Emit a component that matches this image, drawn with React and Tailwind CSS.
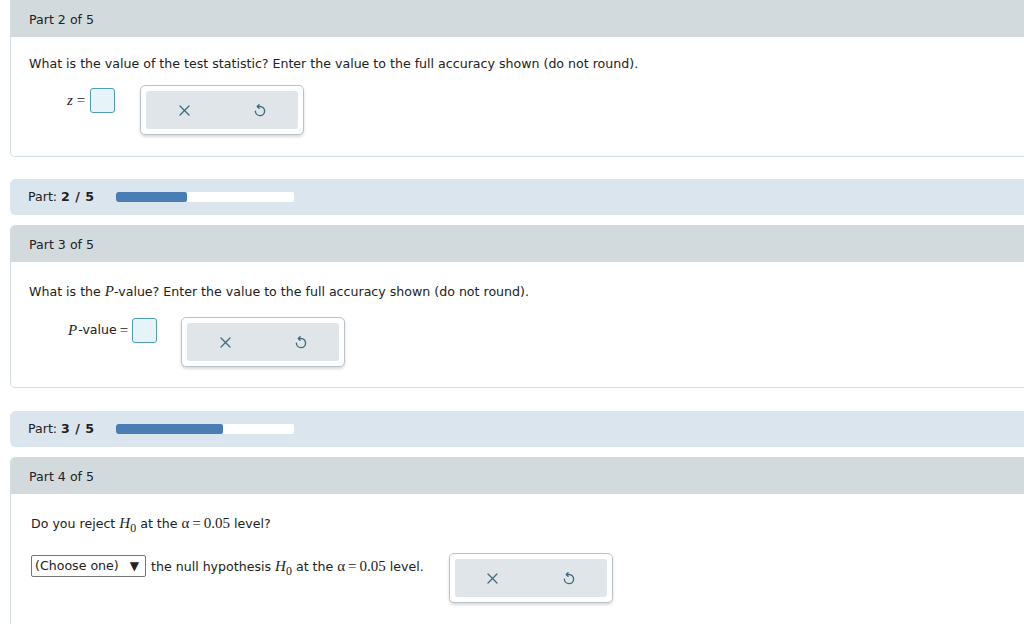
import React from 'react';

const font = { fontFamily: '"DejaVu Sans", Verdana, sans-serif' };

const UndoIcon = () => (
  <svg width="14" height="15" viewBox="0 0 13 14" fill="none" stroke="#3f6c7b" strokeWidth="1.3" strokeLinecap="round" strokeLinejoin="round">
    <path d="M4.2 3.2 H6.5 A4.3 4.3 0 1 1 2.2 7.6" />
    <path d="M5.6 1.6 L4 3.2 L5.6 4.8" />
  </svg>
);

const XIcon = () => (
  <svg width="11" height="11" viewBox="0 0 11 11" stroke="#3f6c7b" strokeWidth="1.3" strokeLinecap="round">
    <path d="M1 1 L10 10 M10 1 L1 10" />
  </svg>
);

const ToolPanel = () => (
  <div className="w-[164px] h-[50px] rounded-[5px] border border-[#b7c3c9] bg-white p-[5px] shadow-[0_2px_3px_rgba(0,0,0,0.15)]">
    <div className="flex h-full rounded-[3px] bg-[#dfe5e8]">
      <div className="flex w-1/2 items-center justify-center">
        <XIcon />
      </div>
      <div className="flex w-1/2 items-center justify-center">
        <UndoIcon />
      </div>
    </div>
  </div>
);

const InputBox = () => (
  <div className="w-[25px] h-[25px] rounded-[3px] border border-[#4e9fb3] bg-[#e6f3f8]" />
);

const Serif = ({ children, italic }) => (
  <span className={`font-['Liberation_Serif'] text-[15px] ${italic ? 'italic' : ''}`}>{children}</span>
);

const H0 = () => (
  <span className="font-['Liberation_Serif'] text-[15px]">
    <i>H</i>
    <span className="relative top-[4px] text-[12px]">0</span>
  </span>
);

const Alpha = () => (
  <span className="font-['Liberation_Serif'] text-[15px]">
    α<span className="mx-[3px]">=</span>0.05
  </span>
);

const CardHeader = ({ text, rounded }) => (
  <div className={`h-[37px] bg-[#d3dadd] flex items-center pl-[18px] pt-[3px] ${rounded ? 'rounded-t-[5px]' : ''}`}>
    {text}
  </div>
);

const Progress = ({ n }) => {
  const pct = (n / 5) * 100;
  return (
    <div className="h-[36px] bg-[#dae5ee] rounded-l-[6px] flex items-center pl-[18px]">
      <span className="w-[88px] pt-[1px]">
        Part: <b className="tracking-[0.5px]">{n}&nbsp;/&nbsp;5</b>
      </span>
      <div className="w-[178px] h-[10px] bg-white rounded-[2px] overflow-hidden">
        <div className="h-full bg-[#4a7db3] rounded-[2px]" style={{ width: pct + '%' }} />
      </div>
    </div>
  );
};

export default function App() {
  return (
    <div className="w-[1024px] h-[624px] overflow-hidden bg-white text-[12.6px] text-[#222]" style={font}>
      <div className="pl-[10px] w-[1040px]">
        {/* Part 2 */}
        <div className="h-[157px] border border-t-0 border-[#d3dde1] rounded-b-[5px]">
          <CardHeader text="Part 2 of 5" />
          <div className="pl-[18px] pt-[18px]">
            <p className="leading-[18px]">
              What is the value of the test statistic? Enter the value to the full accuracy shown (do not round).
            </p>
            <div className="flex items-start mt-[12px] pl-[38px]">
              <div className="flex items-center mt-[3px]">
                <span className="font-['Liberation_Serif'] text-[15px] italic">z</span>
                <span className="font-['Liberation_Serif'] text-[15px] ml-[4px] mr-[5px]">=</span>
                <InputBox />
              </div>
              <div className="ml-[25px]">
                <ToolPanel />
              </div>
            </div>
          </div>
        </div>

        <div className="mt-[22px]">
          <Progress n={2} />
        </div>

        {/* Part 3 */}
        <div className="mt-[10px] h-[163px] border border-t-0 border-[#d3dde1] rounded-[5px]">
          <CardHeader text="Part 3 of 5" rounded />
          <div className="pl-[18px] pt-[20px]">
            <p className="leading-[18px]">
              What is the <Serif italic>P</Serif>-value? Enter the value to the full accuracy shown (do not round).
            </p>
            <div className="flex items-start mt-[16px] pl-[39px]">
              <div className="flex items-center mt-[1px]">
                <Serif italic>P</Serif>
                <span className="ml-[1px]">-value</span>
                <span className="font-['Liberation_Serif'] text-[15px] ml-[3px] mr-[4px]">=</span>
                <InputBox />
              </div>
              <div className="ml-[24px]">
                <ToolPanel />
              </div>
            </div>
          </div>
        </div>

        <div className="mt-[23px]">
          <Progress n={3} />
        </div>

        {/* Part 4 */}
        <div className="mt-[10px] h-[200px] border border-t-0 border-[#d3dde1] rounded-[5px]">
          <CardHeader text="Part 4 of 5" rounded />
          <div className="pl-[20px] pt-[20px]">
            <p className="leading-[18px]">
              Do you reject <H0 /> at the <Alpha /> level?
            </p>
            <div className="flex items-start mt-[20px]">
              <div className="flex items-center mt-[2px]">
                <div className="w-[115px] h-[22px] border border-[#767676] rounded-[2px] flex items-center justify-between pl-[3px] pr-[6px]">
                  <span>(Choose one)</span>
                  <span className="text-[12px]">▼</span>
                </div>
                <span className="ml-[5px]">
                  the null hypothesis <H0 /> at the <Alpha /> level.
                </span>
              </div>
              <div className="ml-[25px]">
                <ToolPanel />
              </div>
            </div>
          </div>
        </div>
      </div>
    </div>
  );
}
